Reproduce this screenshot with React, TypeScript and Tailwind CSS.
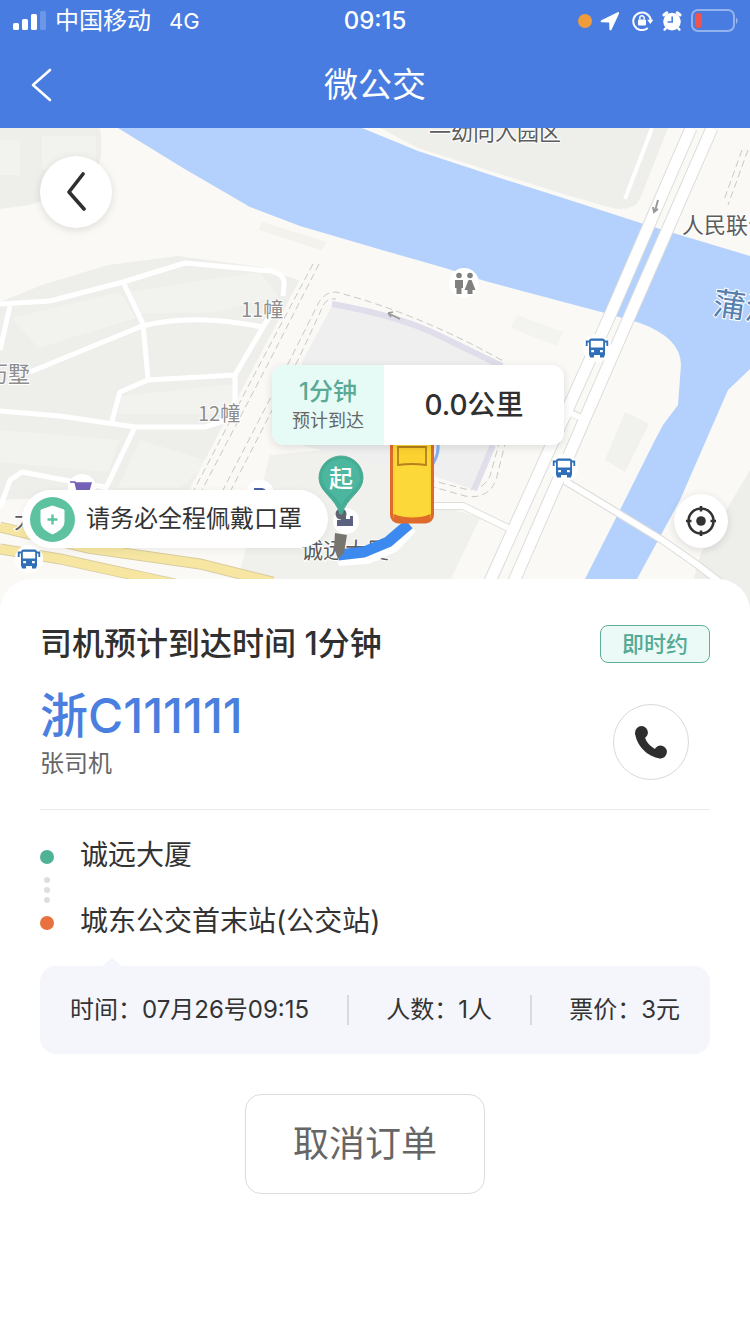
import React from "react";

function StatusBar() {
  return (
    <div className="grid h-[42px] grid-cols-3 items-center pl-3 pr-3 text-[22px] leading-none">
      <div className="flex items-center">
        <svg className="mr-[7px] h-5 w-9" viewBox="0 0 36 20" fill="#fff" aria-hidden="true">
          <rect x="1" y="12" width="6" height="7" rx="1.5" />
          <rect x="10" y="8" width="6" height="11" rx="1.5" />
          <rect x="19" y="3" width="6" height="16" rx="1.5" />
          <rect x="28" y="0" width="6" height="19" rx="1.5" opacity=".2" />
        </svg>
        <span className="whitespace-nowrap text-2xl leading-none">中国移动</span>
        <span className="ml-[18px]">4G</span>
      </div>
      <div className="text-center text-2xl font-medium leading-none">09:15</div>
      <div className="flex items-center justify-end">
        <span className="mr-2 size-3.5 rounded-full bg-[#ee9c3c]" />
        <svg className="mr-3 size-5" viewBox="0 0 20 20" fill="#fff" aria-hidden="true">
          <path d="M17.600 1.200 1.400 9.200c-1.200.6-1 2 .4 2l6.900.2q.5 0 .5.500l.2 6.400c0 1.300 1.500 1.600 2.100.4L19 2.700c.5-1-.3-2-1.400-1.500Z" />
        </svg>
        <svg className="mr-2 h-[22px] w-[22px]" viewBox="0 0 22 22" fill="none" stroke="#fff" aria-hidden="true">
          <path d="M15.8 18A8.8 8.8 0 1 1 18.8 10" strokeWidth="2" />
          <path d="M15.2 9.8h6.2l-3.1 4.2Z" fill="#fff" stroke="none" />
          <rect x="6" y="9.4" width="8" height="6.2" rx="1" fill="#fff" stroke="none" />
          <path d="M7.8 9.6V8a2.2 2.2 0 0 1 4.4 0v1.6" strokeWidth="1.5" />
        </svg>
        <svg className="mr-2 size-5" viewBox="0 0 20 20" aria-hidden="true">
          <circle cx="10" cy="10.6" r="8.8" fill="#fff" />
          <path d="M2 4 4.800 1.800M18 4 15.200 1.800" stroke="#fff" strokeWidth="3" strokeLinecap="round" />
          <path d="m4 17-1.400 1.600M16 17l1.400 1.600" stroke="#fff" strokeWidth="2.4" strokeLinecap="round" />
          <path d="M10.2 5.400v5.600H5.600" fill="none" stroke="#487ce0" strokeWidth="1.6" />
        </svg>
        <svg className="h-6 w-12" viewBox="0 0 48 24" aria-hidden="true">
          <rect x="2" y="1" width="42" height="21" rx="6" fill="none" stroke="#fff" strokeOpacity=".42" strokeWidth="2" />
          <rect x="5" y="4" width="7" height="15" rx="3" fill="#ef5350" />
          <path d="M46 8.5a4 4 0 0 1 0 6.500Z" fill="#fff" opacity=".45" />
        </svg>
      </div>
    </div>
  );
}

function Header() {
  return (
    <header className="bg-[#487ce0] text-white">
      <StatusBar />
      <div className="grid h-[86px] grid-cols-3 items-center">
        <button type="button" aria-label="返回" className="ml-5 flex size-11 items-center justify-center">
          <svg className="h-9 w-6" viewBox="0 0 24 36" fill="none" stroke="#fff" strokeWidth="2.6" strokeLinecap="round" strokeLinejoin="round">
            <path d="M20 3 3 18l17 15" />
          </svg>
        </button>
        <h1 className="text-center text-[34px] font-normal leading-none">微公交</h1>
      </div>
    </header>
  );
}

function BusStop({ x, y }: { x: number; y: number }) {
  return (
    <g transform={`translate(${x} ${y})`}>
      <circle r="14" fill="#fff" />
      <path d="M-8-7q0-2.500 2.500-2.500h11q2.500 0 2.500 2.500V7h-16Z" fill="#2f6fb8" />
      <path d="M-6.200-7.200h12.400V-.500h-12.400Z" fill="#fff" />
      <path d="M-7.500-6.500h-2.800v4.500M7.500-6.500h2.800v4.500" fill="none" stroke="#2f6fb8" strokeWidth="1.800" />
      <path d="M-8 6h5v3.500h-4ZM3 6h5l-1 3.500h-4Z" fill="#2f6fb8" />
      <path d="M-5.800 2h2.800v2.300h-2.800ZM3 2h2.800v2.300h-2.800Z" fill="#fff" />
    </g>
  );
}

function MapCanvas() {
  return (
    <svg
      className="absolute inset-0 h-full w-full"
      viewBox="0 128 750 482"
      preserveAspectRatio="xMidYMin slice"
      fontFamily="'Noto Sans CJK SC', sans-serif"
      role="img"
      aria-label="地图"
    >
      <rect x="0" y="128" width="750" height="482" fill="#faf9f5" />

      <g fill="#eeeeeb">
        <path d="M0 128h100q6 36-12 56L30 205 0 209Z" />
        <path d="M380 128 418 148 560 193 612 208q22 4 28-9l28-71Z" />
        <path d="M0 302 42 285 108 265 178 256 262 267 306 283 200 490 0 500Z" />
        <path d="M262 222l65 20-6 8-62-20Z" fill="#f3f2ed" />
        <path d="M517 315l46 17-6 14-46-18Z" fill="#f3f3f0" />
        <path d="M625 412l24 12-24 48-20-12Z" fill="#f1f1ee" />
        <path d="M750 470 700 555l-14 55h64Z" />
        <path d="M270 455 430 440v62l50 16-44 92H230Z" fill="#f0f0ed" />
      </g>
      <g fill="#f2f2ef">
        <path d="M0 140h20v35H0ZM42 136h54v34H42Z" />
        <path d="M128 292 260 272l18 24-60 16-82 2Z" />
        <path d="M12 318 120 292l16 26-98 30Z" />
        <path d="M122 396l112-12v30H118Z" />
        <path d="M0 430 120 440 108 472 0 462ZM140 440l70 22-30 26h-62Z" />
      </g>

      <path
        d="M118 128 183 168 250 207 300 226 375 248 445 268 485 281 605 313 640 323Q681 338 681 365L678 405 663 425 655 440 620 510 585 579 570 610H622L637 579 680 500 728 390 750 369V256L650 226 560 197 500 178 418 151 362 128Z"
        fill="#b3d1fc"
      />

      <g fill="none" stroke="#fff" strokeWidth="5" strokeLinejoin="round">
        <path d="M0 304 50 301 123 282 185 263 271 271Q285 274 284 284L283 296" />
        <path d="M123 282 143 324 148 379M30 372 142 326Q195 313 262 327" />
        <path d="M272 312 235 375V403M235 375 148 380 120 392 112 421" />
        <path d="M0 411 60 416 135 427H205L230 419M135 427 104 492M10 306 0 350" />
        <path d="M0 508 10 480 22 472 75 482 105 487" />
        <path d="M652 128 625 199" strokeWidth="4" />
      </g>

      <path d="M317 264 197 492M332 300 228 492" stroke="#faf9f5" strokeWidth="16" fill="none" />
      <g fill="none" stroke="#c9c8c5" strokeWidth="1" strokeDasharray="7 4">
        <path d="M319 264 270 360 201 492M313 264 262 360 193 492" />
        <path d="M222 492 290 360 318 304Q324 292 336 292 420 314 505 362" />
        <path d="M230 492 298 360 324 304Q328 298 336 299" />
        <path d="M506 440 496 480Q488 500 465 496L430 486M500 440 490 476Q482 492 465 489L430 480" />
        <path d="M748 150 728 205M742 150 724 200" />
      </g>

      <path d="M333 304 Q350 303 375 312L440 335 505 366 493 445 474 490 434 476 300 445 302 362Z" fill="#f0eff0" />
      <path d="M332 304Q400 316 440 336L502 366M493 445 474 490" fill="none" stroke="#e0deea" strokeWidth="6" />
      <path d="M400 319 388 313M388 313l5-1M388 313l3 4" stroke="#999" strokeWidth="1.600" />

      <g fill="none" strokeLinejoin="round">
        <path d="M691 128 611 313 491 579 477 610" stroke="#dcdcda" strokeWidth="13" />
        <path d="M712 128 631 313 515 579 501 610" stroke="#dcdcda" strokeWidth="13" />
        <path d="M567 411 582 418M433 506H463L508 528" stroke="#dededb" strokeWidth="8" />
        <path d="M565 481 608 507 662 540 695 563 725 586" stroke="#dcdcda" strokeWidth="8" />
        <path d="M691 128 611 313 491 579 477 610M712 128 631 313 515 579 501 610" stroke="#fff" strokeWidth="11" />
        <path d="M565 411 584 419M433 506H463L508 528M565 481 608 507 662 540 695 563 725 586" stroke="#fff" strokeWidth="6" />
      </g>
      <path d="m658 200-3 11m-2-4 1 5 4-3" fill="none" stroke="#999" strokeWidth="2" />

      <g fill="none">
        <path d="M0 527 88 548 200 564 273 582M0 549 60 559 175 584" stroke="#d8cda0" strokeWidth="11" />
        <path d="M0 527 88 548 200 564 273 582M0 549 60 559 175 584" stroke="#f6e6a2" strokeWidth="9" />
      </g>

      <g fill="#5c5c5c" fontSize="22" stroke="#fff" strokeWidth="2" paintOrder="stroke">
        <text x="429" y="140">一幼向入园区</text>
        <text x="682" y="233">人民联合</text>
        <text x="301" y="558">诚远大厦</text>
        <text x="14" y="528">大</text>
        <g fill="#8d8d8d">
          <text x="241" y="317" fontSize="20">11幢</text>
          <text x="198" y="421" fontSize="20">12幢</text>
          <text x="-14" y="382">历墅</text>
        </g>
        <text x="712" y="314" fontSize="32" fill="#5580b0" transform="rotate(8 712 314)">蒲江</text>
      </g>

      <g>
        <circle cx="464" cy="283" r="15" fill="#fff" />
        <g fill="#80807e">
          <circle cx="459" cy="275.500" r="2.800" />
          <circle cx="470" cy="275.500" r="2.800" />
          <path d="M455 280h8v8h-1.500v6h-5v-6H455ZM468.500 280h3l4 10h-3v4h-5v-4h-3Z" />
        </g>
      </g>

      <BusStop x={597} y={348} />
      <BusStop x={564} y={468} />
      <BusStop x={29} y={559} />

      <circle cx="82" cy="488" r="14" fill="#fff" />
      <path d="M70 482h5l2 8h12l2-7H76" fill="#7561b8" stroke="#7561b8" strokeWidth="1.500" />
      <circle cx="260" cy="494" r="14" fill="#fff" />
      <path d="M254 488h8q5 1 5 6h-13Z" fill="#4a5fa5" />
      <circle cx="346" cy="521" r="13" fill="#fff" />
      <path d="M337 520h4v-5h5v4h4v-3h3v10h-16Z" fill="#5b6280" />

      <path d="M437 440q4 12-6 27" fill="none" stroke="#5b95ec" strokeWidth="3" opacity=".7" />
      <path d="M338 558 367 556 392 545 410 526" fill="none" stroke="#fff" strokeWidth="16" strokeLinejoin="round" />
      <path d="M338 555 364 552 388 542 409 524" fill="none" stroke="#3c8af0" strokeWidth="11" strokeLinejoin="round" />
      <path d="M335 533 347 535 344 553 338 559 334 548Z" fill="#77766e" />

      <rect x="391.500" y="420" width="41" height="102" rx="7" fill="#fcd535" stroke="#de6b2c" strokeWidth="3" />
      <path d="M393 514q20 7 38 0l-2 8h-34Z" fill="#de6b2c" />
      <rect x="395" y="430" width="34" height="86" rx="5" fill="#fcd838" />
      <path d="M398 447h28v18q-14-2-28 0Z" fill="#fbd22f" stroke="#b7801d" strokeWidth="1.800" />
    </svg>
  );
}

function RouteMap() {
  return (
    <section className="relative h-[482px] overflow-hidden bg-[#faf9f5]">
      <MapCanvas />

      <button
        type="button"
        aria-label="返回上一页"
        className="absolute left-10 top-7 flex size-[72px] items-center justify-center rounded-full bg-white shadow-[0_2px_8px_rgba(0,0,0,0.12)]"
      >
        <svg className="h-10 w-5" viewBox="0 0 20 40" fill="none" stroke="#303030" strokeWidth="3.600" strokeLinecap="round" strokeLinejoin="round">
          <path d="M17 2 3 20l15 17" />
        </svg>
      </button>

      <div className="absolute left-[22px] top-[362px] flex h-[58px] items-center gap-[11px] rounded-full bg-white pl-2 pr-[26px] shadow-[0_2px_8px_rgba(0,0,0,0.06)]">
        <svg className="size-[45px]" viewBox="0 0 45 45" aria-hidden="true">
          <circle cx="22.500" cy="22.500" r="22.500" fill="#5cc2a0" />
          <path d="M22.500 9 34 13v12q0 7-11.500 12Q11 32 11 25V13Z" fill="#fff" stroke="#fff" strokeLinejoin="round" />
          <path d="M22.500 17.500v10M17.500 22.500h10" stroke="#5cc2a0" strokeWidth="2.400" />
        </svg>
        <span className="whitespace-nowrap text-2xl leading-none text-[#333]">请务必全程佩戴口罩</span>
      </div>

      <div className="absolute left-1/2 top-[327px] -ml-[57px]">
        <svg className="h-[66px] w-[46px]" viewBox="0 0 46 66" aria-hidden="true">
          <circle cx="23" cy="59" r="5.500" fill="#5f6370" />
          <path d="M23 1a22 22 0 0 1 22 22c0 14-17 20-21 36h-2C18 43 1 37 1 23A22 22 0 0 1 23 1Z" fill="#43ae95" stroke="#4fa892" />
          <path d="M23 4a19 19 0 0 1 19 19c0 10-13 16-19 27C17 39 4 33 4 23A19 19 0 0 1 23 4Z" fill="#4db69e" />
        </svg>
        <span className="absolute inset-x-0 top-3 text-center text-2xl font-medium leading-none text-white">起</span>
      </div>

      <div className="absolute left-1/2 top-[237px] -ml-[103px] flex h-20 w-[292px] overflow-hidden rounded-xl bg-white shadow-[0_2px_8px_rgba(0,0,0,0.12)]">
        <div className="flex w-28 flex-col items-center justify-center gap-2 bg-[#e6fbf6]">
          <span className="text-2xl font-medium leading-none text-[#5aa994]">1分钟</span>
          <span className="text-lg leading-none text-[#666]">预计到达</span>
        </div>
        <div className="flex flex-1 items-center justify-center text-[28px] font-medium leading-none text-[#303030]">0.0公里</div>
      </div>

      <button
        type="button"
        aria-label="定位"
        className="absolute right-[22px] top-[366px] flex size-[54px] items-center justify-center rounded-full bg-white shadow-[0_2px_8px_rgba(0,0,0,0.12)]"
      >
        <svg className="size-8" viewBox="0 0 32 32" fill="none" stroke="#333" strokeWidth="2.600">
          <circle cx="16" cy="16" r="12.500" />
          <circle cx="16" cy="16" r="4.800" fill="#333" stroke="none" />
          <path d="M16 1v5.500M16 25.500V31M1 16h5.500M25.500 16H31" />
        </svg>
      </button>
    </section>
  );
}

function Stops() {
  return (
    <div className="flex gap-[26px] pt-3">
      <div className="flex flex-col items-center pt-7" aria-hidden="true">
        <span className="size-3.5 rounded-full bg-[#4fb297]" />
        <span className="flex h-[52px] flex-col items-center justify-center gap-1">
          <i className="size-1.5 rounded-full bg-[#dedede]" />
          <i className="size-1.5 rounded-full bg-[#dedede]" />
          <i className="size-1.5 rounded-full bg-[#dedede]" />
        </span>
        <span className="size-3.5 rounded-full bg-[#e9713f]" />
      </div>
      <ol className="text-[28px] leading-[66px] text-[#333]">
        <li>诚远大厦</li>
        <li>城东公交首末站(公交站)</li>
      </ol>
    </div>
  );
}

function TripInfo() {
  return (
    <div className="relative mt-3 flex h-[88px] items-center justify-between rounded-2xl bg-[#f4f6fb] px-[30px] text-2xl leading-none text-[#333]">
      <svg className="absolute -top-2 left-[62px] h-2 w-5" viewBox="0 0 20 8" fill="#f4f6fb" aria-hidden="true">
        <path d="M10 0 20 8H0Z" />
      </svg>
      <span>时间：07月26号09:15</span>
      <span className="h-[30px] w-0.5 bg-[#d5dbe0]" />
      <span>人数：1人</span>
      <span className="h-[30px] w-0.5 bg-[#d5dbe0]" />
      <span>票价：3元</span>
    </div>
  );
}

export default function App() {
  return (
    <div className="flex min-h-screen flex-col bg-white font-['Inter','Noto_Sans_CJK_SC',sans-serif]">
      <Header />
      <RouteMap />
      <main className="relative -mt-[31px] flex-1 rounded-t-[32px] bg-white px-10 pb-10 pt-[46px]">
        <div className="flex h-[38px] items-center justify-between">
          <h2 className="text-[32px] font-medium leading-none text-[#303030]">司机预计到达时间 1分钟</h2>
          <span className="flex h-[38px] w-[110px] items-center justify-center rounded-lg border border-[#5fb09b] bg-[#ebfaf7] text-[22px] font-medium leading-none text-[#55aa94]">
            即时约
          </span>
        </div>
        <div className="mt-[21px] flex items-end justify-between border-b border-[#ebebeb] pb-[29px]">
          <div>
            <p className="text-5xl font-medium leading-[64px] text-[#4a7fe0]">浙C111111</p>
            <p className="text-2xl leading-8 text-[#666]">张司机</p>
          </div>
          <a
            href="tel:111111"
            aria-label="联系司机"
            className="mr-[21px] flex size-[76px] items-center justify-center rounded-full border border-[#d9d9d9] bg-white"
          >
            <svg className="size-9" viewBox="0 0 36 36" aria-hidden="true">
              <g fill="#2e2e2e">
                <circle cx="8.500" cy="8.500" r="6.400" />
                <circle cx="27.500" cy="28" r="6.400" />
                <path d="M2.100 8.500C3 21 14 33 27.500 34.400L22 25C17 22 13 17.500 12.200 13.700Z" />
              </g>
            </svg>
          </a>
        </div>
        <Stops />
        <TripInfo />
        <div className="mt-10 flex justify-center pr-5">
          <button
            type="button"
            className="h-[100px] w-60 rounded-2xl border border-[#dcdcdc] bg-white text-4xl leading-none text-[#666]"
          >
            取消订单
          </button>
        </div>
      </main>
    </div>
  );
}
